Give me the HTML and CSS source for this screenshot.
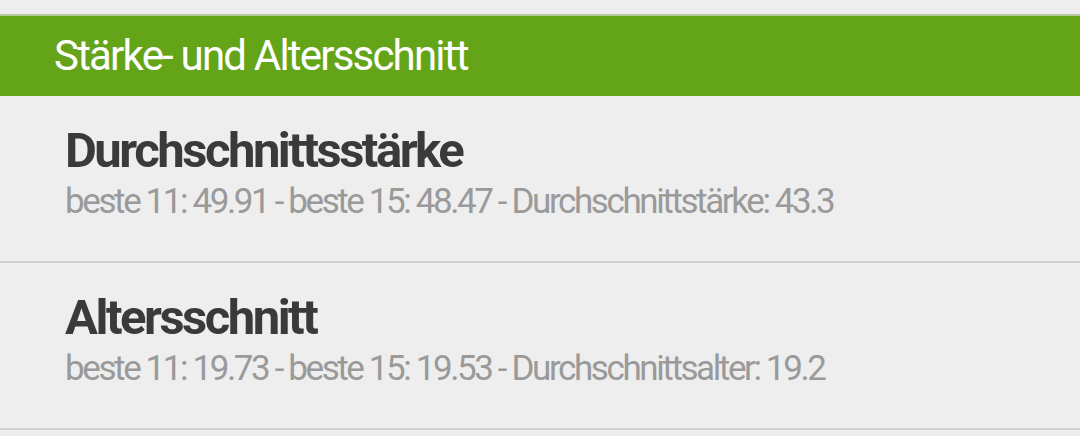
FILE: index.html
```html
<!DOCTYPE html>
<html lang="de">
<head>
<meta charset="UTF-8">
<meta name="viewport" content="width=device-width, initial-scale=1.0">
<title>Stärke- und Altersschnitt</title>
<link rel="stylesheet" href="styles.css">
</head>
<body>
<div class="page">
    <div class="section-head">Stärke- und Altersschnitt</div>
    <ul class="stat-list">
        <li class="stat">
            <div class="stat-title">Durchschnittsstärke</div>
            <div class="stat-detail">beste 11: 49.91 - beste 15: 48.47 - Durchschnittstärke: 43.3</div>
        </li>
        <li class="stat">
            <div class="stat-title">Altersschnitt</div>
            <div class="stat-detail">beste 11: 19.73 - beste 15: 19.53 - Durchschnittsalter: 19.2</div>
        </li>
    </ul>
</div>
</body>
</html>
```

FILE: styles.css
```css
body {
    margin: 0;
    background-color: #eeeeee;
    font-family: Roboto, "Noto Sans", sans-serif;
}
.page {
    padding-top: 14px;
}
.section-head {
    border-top: 2px solid #b4c99e; /* faded edge above the bar */
    background-color: #64a419;
    color: #fff;
    height: 82px;
    box-sizing: border-box;
    padding: 19px 0 0 54px;
    font-size: 42px;
    line-height: 42px;
    letter-spacing: -1.8px;
}
.stat-list {
    list-style: none;
    margin: 0;
    padding: 0;
}
.stat {
    height: 167px;
    box-sizing: border-box;
    padding: 30px 0 0 65px;
    border-bottom: 2px solid #d0d0d0;
}
.stat-title {
    color: #3a3a3c;
    font-weight: bold;
    font-size: 49px;
    line-height: 49px;
    letter-spacing: -2.5px;
}
.stat-detail {
    color: #9a9a9a;
    font-size: 35px;
    line-height: 53px;
    letter-spacing: -2.4px;
}
```
